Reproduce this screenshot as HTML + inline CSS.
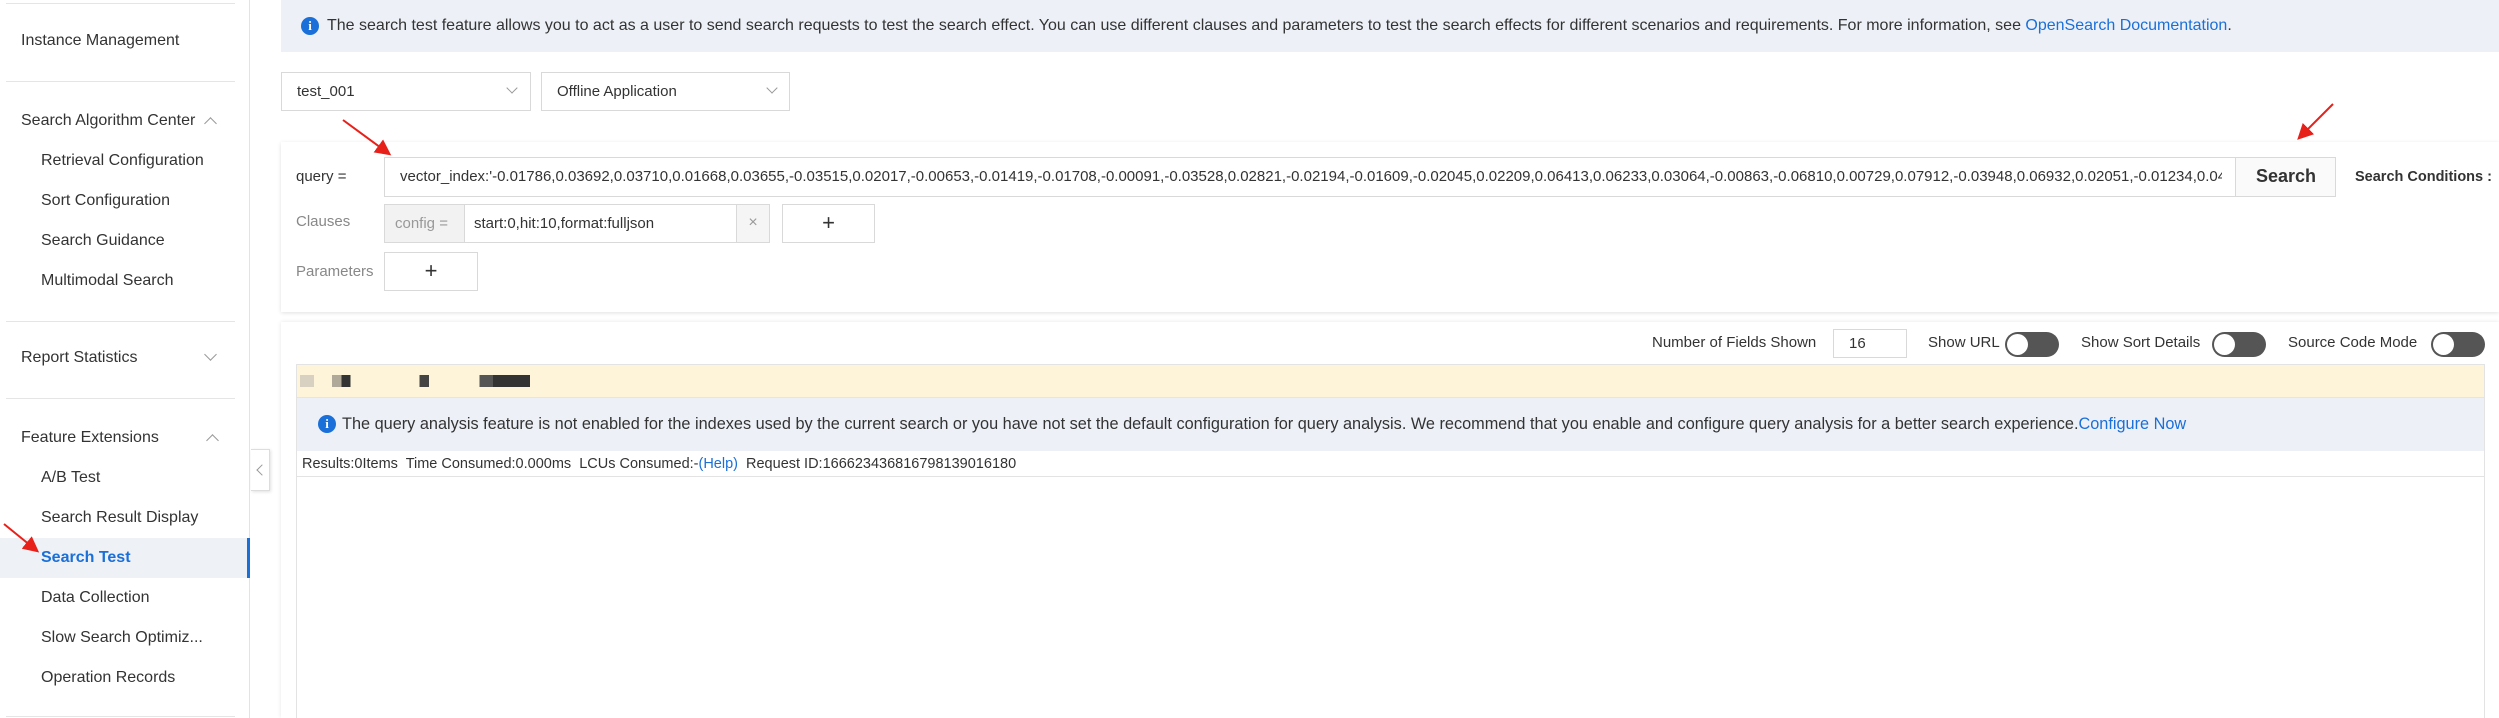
<!DOCTYPE html>
<html><head><meta charset="utf-8"><style>
*{box-sizing:border-box;margin:0;padding:0}
body{width:2499px;height:718px;position:relative;overflow:hidden;background:#fff;font-family:"Liberation Sans",sans-serif;color:#333;font-size:15px}
.a{position:absolute}
.sb{left:0;top:0;width:250px;height:718px;background:#fff;border-right:1px solid #e3e3e3}
.sep{position:absolute;left:6px;width:229px;height:1px;background:#e5e5e5}
.it{position:absolute;font-size:16px;color:#333;white-space:nowrap;line-height:20px}
.sub{left:41px}
.chev{position:absolute;width:9px;height:9px;border-left:1.5px solid #999;border-top:1.5px solid #999}
.box{position:absolute;border:1px solid #d9d9d9;background:#fff}
.t{position:absolute;white-space:nowrap;line-height:20px}
.tog{position:absolute;width:54px;height:25px;border-radius:13px;background:#555}
.tog:after{content:"";position:absolute;left:2px;top:2px;width:21px;height:21px;border-radius:50%;background:#fff}
.ic{position:absolute;width:18px;height:18px;border-radius:50%;background:#1a6fd8;color:#fff;font:bold 13px "Liberation Serif",serif;text-align:center;line-height:18px}
</style></head><body>
<div class="a sb">
<div class="sep" style="top:3px"></div>
<div class="it" style="left:21px;top:31px">Instance Management</div>
<div class="sep" style="top:81px"></div>
<div class="it" style="left:21px;top:111px">Search Algorithm Center</div>
<div class="chev" style="left:206px;top:119px;transform:rotate(45deg)"></div>
<div class="it sub" style="top:151px">Retrieval Configuration</div>
<div class="it sub" style="top:191px">Sort Configuration</div>
<div class="it sub" style="top:231px">Search Guidance</div>
<div class="it sub" style="top:271px">Multimodal Search</div>
<div class="sep" style="top:321px"></div>
<div class="it" style="left:21px;top:348px">Report Statistics</div>
<div class="chev" style="left:206px;top:350px;transform:rotate(225deg)"></div>
<div class="sep" style="top:398px"></div>
<div class="it" style="left:21px;top:428px">Feature Extensions</div>
<div class="chev" style="left:208px;top:436px;transform:rotate(45deg)"></div>
<div class="it sub" style="top:468px">A/B Test</div>
<div class="it sub" style="top:508px">Search Result Display</div>
<div class="a" style="left:0;top:538px;width:250px;height:40px;background:#eef1f6;border-right:3px solid #1a6fd8"></div>
<div class="it sub" style="top:548px;color:#1a6fd8;font-weight:bold">Search Test</div>
<div class="it sub" style="top:588px">Data Collection</div>
<div class="it sub" style="top:628px">Slow Search Optimiz...</div>
<div class="it sub" style="top:668px">Operation Records</div>
<div class="sep" style="top:716px"></div>
</div>
<div class="a" style="left:251px;top:449px;width:19px;height:42px;background:#fff;border:1px solid #ddd;border-left:none;box-shadow:1px 1px 3px rgba(0,0,0,.12)"><div class="chev" style="left:7px;top:16px;transform:rotate(-45deg);width:8px;height:8px"></div></div>

<div class="a" style="left:281px;top:0;width:2218px;height:52px;background:#edf1f7"></div>
<div class="ic" style="left:301px;top:17px">i</div>
<div class="t" style="left:327px;top:16px;font-size:16px">The search test feature allows you to act as a user to send search requests to test the search effect. You can use different clauses and parameters to test the search effects for different scenarios and requirements. For more information, see <span style="color:#1a6fd8">OpenSearch Documentation</span>.</div>

<div class="box" style="left:281px;top:72px;width:250px;height:39px"></div>
<div class="t" style="left:297px;top:82px">test_001</div>
<div class="chev" style="left:508px;top:84px;transform:rotate(225deg);width:8px;height:8px"></div>
<div class="box" style="left:541px;top:72px;width:249px;height:39px"></div>
<div class="t" style="left:557px;top:82px">Offline Application</div>
<div class="chev" style="left:768px;top:84px;transform:rotate(225deg);width:8px;height:8px"></div>

<div class="a" style="left:281px;top:142px;width:2218px;height:170px;background:#fff;box-shadow:0 1px 4px rgba(0,0,0,.12)"></div>
<div class="t" style="left:296px;top:167px">query =</div>
<div class="box" style="left:384px;top:157px;width:1952px;height:40px"></div>
<div class="t" style="left:400px;top:167px;width:1822px;overflow:hidden">vector_index:'-0.01786,0.03692,0.03710,0.01668,0.03655,-0.03515,0.02017,-0.00653,-0.01419,-0.01708,-0.00091,-0.03528,0.02821,-0.02194,-0.01609,-0.02045,0.02209,0.06413,0.06233,0.03064,-0.00863,-0.06810,0.00729,0.07912,-0.03948,0.06932,0.02051,-0.01234,0.04412</div>
<div class="a" style="left:2235px;top:157px;width:101px;height:40px;background:#fafafa;border:1px solid #d9d9d9"></div>
<div class="t" style="left:2256px;top:166px;font-size:18px;font-weight:bold;color:#333">Search</div>
<div class="t" style="left:2355px;top:167px;font-weight:bold;font-size:14.5px">Search Conditions :</div>

<div class="t" style="left:296px;top:212px;color:#888">Clauses</div>
<div class="box" style="left:384px;top:204px;width:386px;height:39px"></div>
<div class="a" style="left:385px;top:205px;width:80px;height:37px;background:#f2f2f2;border-right:1px solid #d9d9d9"></div>
<div class="t" style="left:395px;top:214px;color:#999">config =</div>
<div class="t" style="left:474px;top:214px">start:0,hit:10,format:fulljson</div>
<div class="a" style="left:736px;top:205px;width:33px;height:37px;background:#f5f5f5;border-left:1px solid #d9d9d9;color:#999;text-align:center;line-height:36px;font-size:16px">×</div>
<div class="box" style="left:782px;top:204px;width:93px;height:39px;text-align:center;line-height:36px;font-size:22px">+</div>
<div class="t" style="left:296px;top:262px;color:#888">Parameters</div>
<div class="box" style="left:384px;top:252px;width:94px;height:39px;text-align:center;line-height:36px;font-size:22px;color:#333">+</div>

<div class="a" style="left:281px;top:322px;width:2218px;height:396px;background:#fff;box-shadow:0 0 4px rgba(0,0,0,.1)"></div>
<div class="t" style="left:1652px;top:333px">Number of Fields Shown</div>
<div class="box" style="left:1833px;top:329px;width:74px;height:29px"></div>
<div class="t" style="left:1849px;top:334px">16</div>
<div class="t" style="left:1928px;top:333px">Show URL</div>
<div class="tog" style="left:2005px;top:332px"></div>
<div class="t" style="left:2081px;top:333px">Show Sort Details</div>
<div class="tog" style="left:2212px;top:332px"></div>
<div class="t" style="left:2288px;top:333px">Source Code Mode</div>
<div class="tog" style="left:2431px;top:332px"></div>

<div class="a" style="left:296px;top:364px;width:2189px;height:354px;border:1px solid #e3e3e3;border-bottom:none"></div>
<div class="a" style="left:297px;top:365px;width:2187px;height:33px;background:#fdf4d9;border-bottom:1px solid #f6e6b0"></div>
<div class="a" style="left:300px;top:375px;width:230px;height:12px;background:linear-gradient(90deg,#d8d0c0 0 6%,#fdf4d9 6% 14%,#b0a898 14% 18%,#333 18% 22%,#fdf4d9 22% 52%,#444 52% 56%,#fdf4d9 56% 78%,#555 78% 84%,#333 84% 92%)"></div>
<div class="a" style="left:297px;top:398px;width:2187px;height:53px;background:#edf1f7"></div>
<div class="ic" style="left:318px;top:415px">i</div>
<div class="t" style="left:342px;top:414px;font-size:16.3px">The query analysis feature is not enabled for the indexes used by the current search or you have not set the default configuration for query analysis. We recommend that you enable and configure query analysis for a better search experience.<span style="color:#1a6fd8">Configure Now</span></div>
<div class="t" style="left:302px;top:454px;font-size:14.5px">Results:0Items&nbsp; Time Consumed:0.000ms&nbsp; LCUs Consumed:-<span style="color:#1a6fd8">(Help)</span>&nbsp; Request ID:166623436816798139016180</div>
<div class="a" style="left:297px;top:476px;width:2187px;height:1px;background:#e3e3e3"></div>

<svg class="a" style="left:0;top:0" width="2499" height="718">
<defs><marker id="m" markerWidth="8" markerHeight="8" refX="6" refY="4" orient="auto"><path d="M0,0 L8,4 L0,8 z" fill="#e8201a"/></marker></defs>
<line x1="343" y1="120" x2="388" y2="153" stroke="#e8201a" stroke-width="2" marker-end="url(#m)"/>
<line x1="2333" y1="104" x2="2300" y2="137" stroke="#e8201a" stroke-width="2" marker-end="url(#m)"/>
<line x1="4" y1="524" x2="36" y2="550" stroke="#e8201a" stroke-width="2" marker-end="url(#m)"/>
</svg>
</body></html>
